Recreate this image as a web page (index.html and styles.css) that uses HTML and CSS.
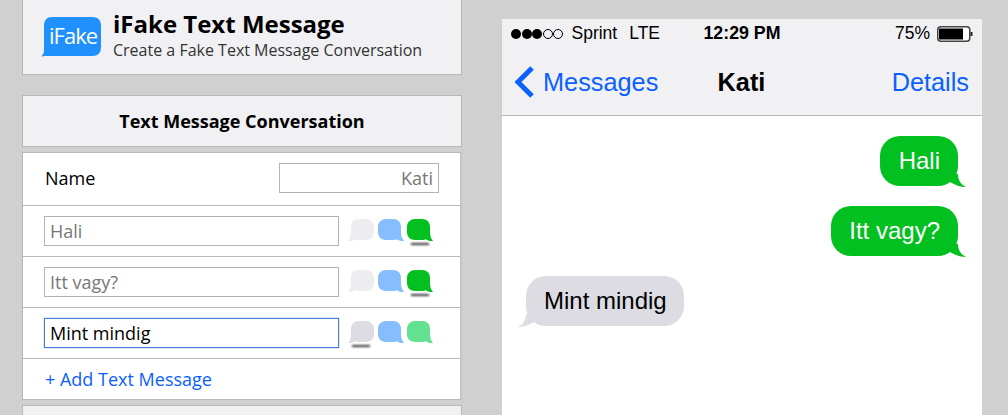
FILE: index.html
```html
<!DOCTYPE html>
<html lang="en">

<head>
    <meta charset="UTF-8">
    <meta name="viewport" content="width=device-width, initial-scale=1.0">
    <title>iFake Text Message</title>
    <link rel="stylesheet" href="styles.css">
</head>

<body>
    <svg class="defs" width="0" height="0">
        <symbol id="bubble" viewBox="0 0 26 24">
            <path d="M8 0H15C20 0 23 3 23 8V12C23 16 23.500 19 26 22C22.500 22.300 20.500 21.500 19 20.300C18 20.800 16.500 21 15 21H8C3.500 21 0 18 0 13V8C0 3 3.500 0 8 0Z" />
        </symbol>
        <symbol id="bubble-left" viewBox="0 0 26 24">
            <path d="M18 0H11C6 0 3 3 3 8V12C3 16 2.500 19 0 22C3.500 22.300 5.500 21.500 7 20.300C8 20.800 9.500 21 11 21H18C22.500 21 26 18 26 13V8C26 3 22.500 0 18 0Z" />
        </symbol>
        <symbol id="tail" viewBox="0 0 20 14">
            <path d="M12 0C12 5 14 10 20 13C14.500 13 9 11 4 8L0 0Z" />
        </symbol>
        <symbol id="tail-left" viewBox="0 0 20 14">
            <path d="M8 0C8 5 6 10 0 13C5.500 13 11 11 16 8L20 0Z" />
        </symbol>
    </svg>

    <div class="page">
        <div class="editor">
            <div class="brand">
                <svg class="logo" viewBox="0 0 62 42">
                    <path d="M12 1H52C58 1 61 4 61 10V31C61 37 58 40 52 40H9C6 40 4 40 1 40.500C3 39 4 37 4 34V10C4 4 7 1 12 1Z" fill="#2090ff" />
                    <text x="9" y="28" class="logo-text">iFake</text>
                </svg>
                <div>
                    <h1>iFake Text Message</h1>
                    <p>Create a Fake Text Message Conversation</p>
                </div>
            </div>

            <h2 class="section-title">Text Message Conversation</h2>

            <div class="rows">
                <div class="row name-row">
                    <label>Name</label>
                    <input class="field name-field" type="text" placeholder="Kati">
                </div>
                <div class="row message-row">
                    <input class="field" type="text" placeholder="Hali">
                    <div class="colors">
                        <span class="pick"><svg class="gray faded"><use href="#bubble-left" /></svg></span>
                        <span class="pick"><svg class="blue"><use href="#bubble" /></svg></span>
                        <span class="pick on"><svg class="green"><use href="#bubble" /></svg></span>
                    </div>
                </div>
                <div class="row message-row">
                    <input class="field" type="text" placeholder="Itt vagy?">
                    <div class="colors">
                        <span class="pick"><svg class="gray faded"><use href="#bubble-left" /></svg></span>
                        <span class="pick"><svg class="blue"><use href="#bubble" /></svg></span>
                        <span class="pick on"><svg class="green"><use href="#bubble" /></svg></span>
                    </div>
                </div>
                <div class="row message-row">
                    <input class="field focused" type="text" value="Mint mindig">
                    <div class="colors">
                        <span class="pick on"><svg class="gray"><use href="#bubble-left" /></svg></span>
                        <span class="pick"><svg class="blue"><use href="#bubble" /></svg></span>
                        <span class="pick"><svg class="green faded-green"><use href="#bubble" /></svg></span>
                    </div>
                </div>
                <div class="add-row"><a href="#">+ Add Text Message</a></div>
            </div>

            <div class="next-section"></div>
        </div>

        <div class="phone">
            <div class="status">
                <div class="status-left">
                    <span class="dots">
                        <i class="dot"></i><i class="dot"></i><i class="dot"></i><i class="dot empty"></i><i class="dot empty"></i>
                    </span>
                    <span>Sprint</span>
                    <span>LTE</span>
                </div>
                <b class="time">12:29 PM</b>
                <div class="status-right">
                    <span>75%</span>
                    <svg class="battery" viewBox="0 0 36 16">
                        <rect x="0.750" y="0.750" width="32" height="14.500" rx="3" fill="#fff" stroke="#444" stroke-width="1.500" />
                        <rect x="2" y="2.500" width="24" height="11" fill="#000" />
                        <rect x="33.500" y="6" width="2" height="4" fill="#222" />
                    </svg>
                </div>
            </div>

            <div class="nav">
                <a class="back" href="#">
                    <svg class="chevron" viewBox="0 0 20 32">
                        <path d="M18 2L4 16L18 30" fill="none" stroke="#0a60ff" stroke-width="5" />
                    </svg>
                    Messages
                </a>
                <b class="contact">Kati</b>
                <a class="details" href="#">Details</a>
            </div>

            <div class="thread">
                <div class="bubble sent">Hali<svg class="tail"><use href="#tail" /></svg></div>
                <div class="bubble sent">Itt vagy?<svg class="tail"><use href="#tail" /></svg></div>
                <div class="bubble received">Mint mindig<svg class="tail"><use href="#tail-left" /></svg></div>
            </div>
        </div>
    </div>
</body>

</html>
```

FILE: styles.css
```css
html,
body {
    height: 415px;
    overflow: hidden;
}

body {
    margin: 0;
    background-color: #d0d0d0;
    font-family: "Open Sans", sans-serif;
}

.defs {
    display: block;
    height: 0;
}

.page {
    display: flex;
    gap: 40px;
    padding-left: 22px;
}

.editor {
    width: 440px;
    flex: none;
}

.brand {
    display: flex;
    align-items: flex-start;
    gap: 11px;
    height: 75px;
    box-sizing: border-box;
    padding: 10px 0 0 17px;
    background-color: #f1f1f4;
    border: 1px solid #b8b8b8;
    border-top: 0;
    margin-bottom: 20px;
}

.logo {
    width: 62px;
    height: 42px;
    margin-top: 6px;
}

.logo-text {
    font-family: "Open Sans", sans-serif;
    font-size: 22px;
    letter-spacing: -1px;
    fill: #fff;
}

h1 {
    margin: 0;
    font-size: 24px;
    line-height: 28px;
    font-weight: 700;
    color: #000;
}

.brand p {
    margin: 2px 0 0;
    font-size: 16px;
    line-height: 20px;
    color: #333;
}

.section-title {
    margin: 0 0 5px;
    height: 50px;
    background-color: #f1f1f4;
    border: 1px solid #b8b8b8;
    font-size: 18px;
    line-height: 50px;
    font-weight: 700;
    text-align: center;
    color: #000;
}

.rows {
    background-color: #fff;
    border: 1px solid #b8b8b8;
    border-right-width: 2px;
    border-right-color: #c4c4c4;
}

.row {
    display: flex;
    align-items: center;
    box-sizing: border-box;
    border-bottom: 1px solid #b8b8b8;
    padding: 0 21px 0 21px;
}

.name-row {
    justify-content: space-between;
    height: 53px;
    font-size: 18px;
    padding-left: 22px;
    padding-bottom: 2px;
}

.message-row {
    height: 51px;
}

.field {
    box-sizing: border-box;
    width: 295px;
    height: 30px;
    padding: 0 5px;
    border: 1px solid #b4b4b4;
    font-family: "Open Sans", sans-serif;
    font-size: 18px;
    color: #000;
    outline: none;
}

.field::placeholder {
    color: #777;
    opacity: 1;
}

.name-field {
    width: 160px;
    text-align: right;
}

.focused {
    border-color: #4a7fd6;
    box-shadow: 0 0 1px #4a7fd6;
}

.colors {
    display: flex;
    gap: 3.500px;
    margin-left: 9px;
    padding-top: 6px;
}

.pick {
    position: relative;
    display: block;
    width: 26px;
    height: 30px;
}

.pick svg {
    display: block;
    width: 26px;
    height: 24px;
    filter: blur(0.3px);
}

.pick.on::after {
    content: "";
    position: absolute;
    left: 4px;
    right: 4px;
    top: 24px;
    height: 2px;
    background-color: #333;
    filter: blur(0.8px);
}

.gray {
    fill: #dcdce2;
}

.faded {
    fill: #ededf0;
}

.blue {
    fill: #86bdff;
}

.green {
    fill: #02c01f;
}

.faded-green {
    fill: #64e091;
}

.add-row {
    height: 40px;
    font-size: 18px;
    line-height: 40px;
    padding-left: 22px;
}

.add-row a {
    color: #0a60ff;
    text-decoration: none;
}

.next-section {
    height: 9px;
    margin-top: 5px;
    background-color: #f1f1f4;
    border: 1px solid #b8b8b8;
    border-bottom: 0;
}

.phone {
    width: 480px;
    height: 396px;
    flex: none;
    margin-top: 19px;
    background-color: #fff;
    font-family: "Liberation Sans", Arial, sans-serif;
    color: #000;
}

.status {
    display: grid;
    grid-template-columns: 1fr auto 1fr;
    align-items: center;
    height: 29px;
    padding: 0 9px;
    background-color: #f1f1f4;
    font-size: 17.500px;
}

.time {
    font-size: 17.800px;
}

.status-left {
    display: flex;
    align-items: center;
    gap: 12px;
}

.dots {
    display: flex;
    margin-right: -4px;
}

.dot {
    display: block;
    box-sizing: border-box;
    width: 10px;
    height: 10px;
    margin-right: 0.500px;
    border-radius: 50%;
    background-color: #000;
}

.dot.empty {
    background-color: transparent;
    border: 1px solid #000;
}

.status-right {
    display: flex;
    justify-content: flex-end;
    align-items: center;
    gap: 7px;
}

.battery {
    width: 36px;
    height: 16px;
}

.nav {
    display: grid;
    grid-template-columns: 1fr auto 1fr;
    align-items: center;
    height: 68px;
    box-sizing: border-box;
    padding: 1px 13px 0 12px;
    background-color: #f1f1f4;
    border-bottom: 1px solid #b8b8b8;
    font-size: 25.300px;
}

.nav a {
    color: #0a60ff;
    text-decoration: none;
}

.back {
    display: flex;
    align-items: center;
    gap: 9px;
}

.chevron {
    width: 20px;
    height: 32px;
}

.details {
    text-align: right;
}

.thread {
    display: flex;
    flex-direction: column;
    gap: 20px;
    padding: 20px 24px;
}

.bubble {
    position: relative;
    box-sizing: border-box;
    height: 50px;
    border-radius: 20px;
    font-size: 24px;
    line-height: 50px;
}

.sent {
    align-self: flex-end;
    padding: 0 18px 0 18.500px;
    background-color: #02c01f;
    color: #fff;
}

.received {
    align-self: flex-start;
    padding: 0 17.500px 0 18px;
    background-color: #dcdce2;
}

/* tail sticks out of the bubble's lower corner */
.tail {
    position: absolute;
    bottom: -2px;
    width: 20px;
    height: 14px;
}

.sent .tail {
    right: -8px;
    fill: #02c01f;
}

.received .tail {
    left: -8px;
    fill: #dcdce2;
}
```
